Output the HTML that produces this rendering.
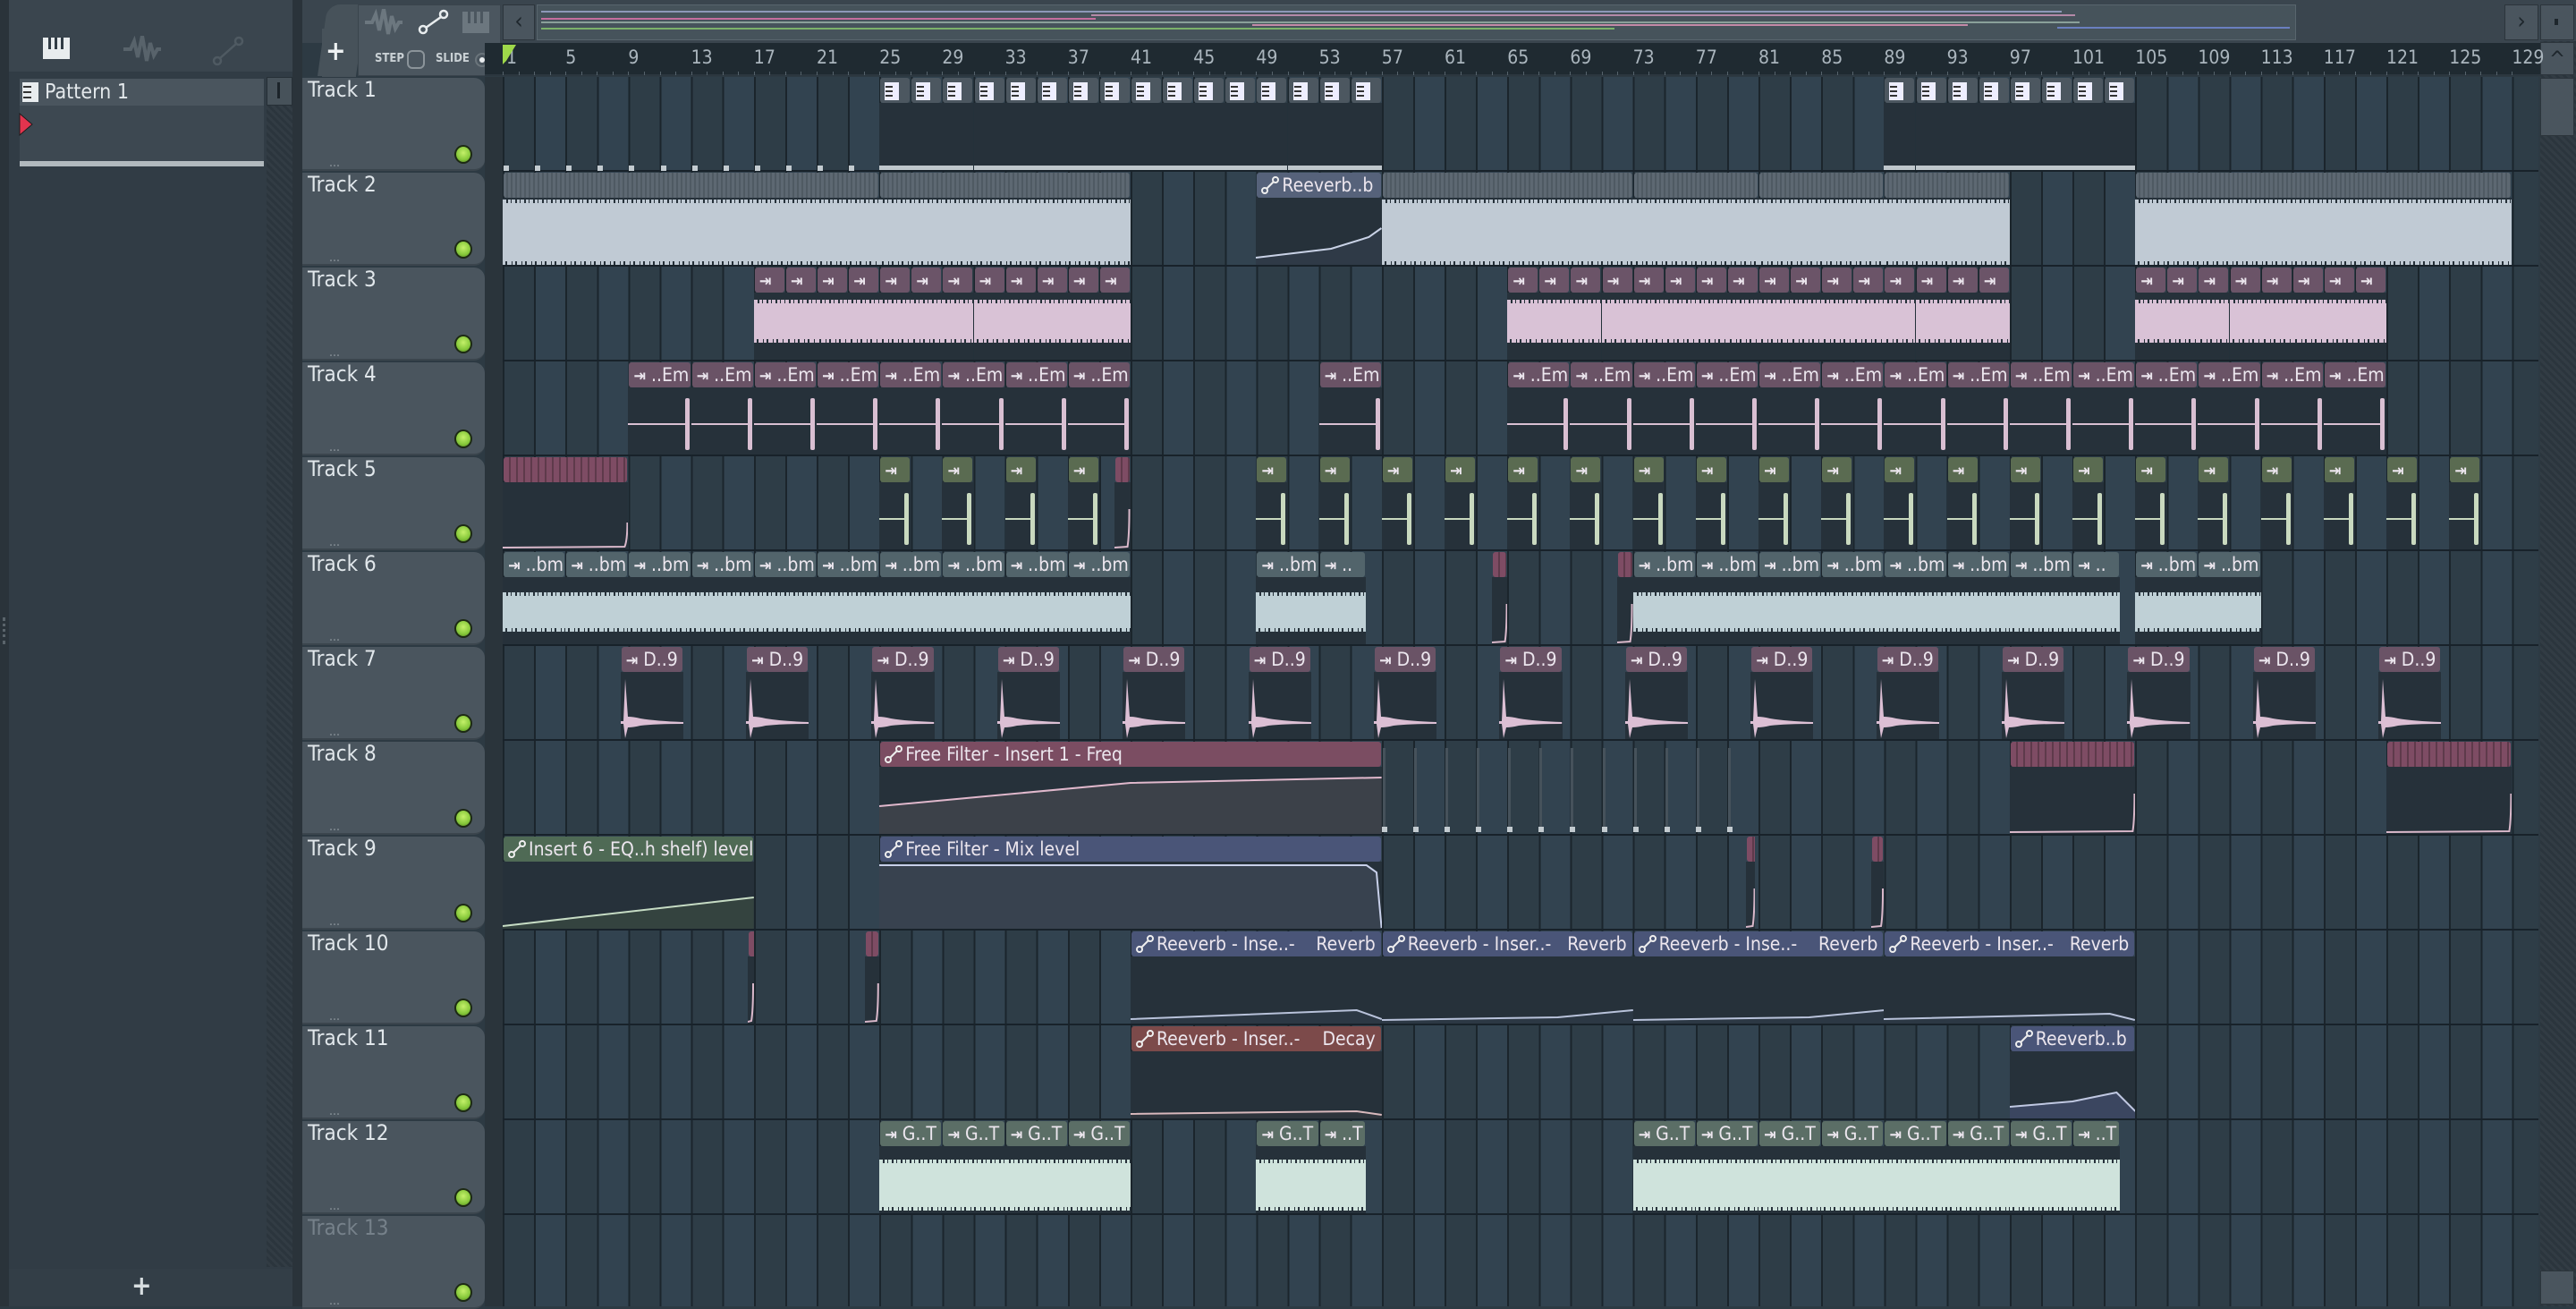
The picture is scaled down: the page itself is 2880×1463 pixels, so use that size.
<!DOCTYPE html>
<html><head><meta charset="utf-8"><style>
*{margin:0;padding:0;box-sizing:border-box}
body{width:2880px;height:1460px;overflow:hidden;background:#2d3a43;font-family:"DejaVu Sans Condensed","Liberation Sans Narrow","Liberation Sans",sans-serif;position:relative}
.a{position:absolute}
.clip{position:absolute;overflow:hidden}
.hd{position:absolute;left:1px;right:1px;top:0;height:28px;color:#ece6ee;font-size:21px;line-height:28px;padding-left:5px;white-space:nowrap;display:flex;justify-content:space-between;padding-right:6px;border-radius:3px;overflow:hidden}
.bd{position:absolute;left:0;right:0;top:28px;bottom:0;background:#26313a}
.tl{position:absolute;left:344px;color:#e1e7eb;font-size:24px}
</style></head><body>
<div class="a" style="left:0;top:0;width:10px;height:1460px;background:#2a333a"></div>
<div class="a" style="left:3px;top:690px;width:3px;height:30px;border-left:3px dotted #5a646b"></div>
<div class="a" style="left:10px;top:0;width:328px;height:86px;background:#3a454e"></div>
<div class="a" style="left:10px;top:80px;width:318px;height:1380px;background:#313c45"></div>
<svg class="a" style="left:48px;top:42px" width="30" height="24"><rect x="0" y="0" width="30" height="24" fill="#e8ecee"/><rect x="6" y="0" width="3" height="13" fill="#313c45"/><rect x="13" y="0" width="3" height="13" fill="#313c45"/><rect x="20" y="0" width="3" height="13" fill="#313c45"/></svg>
<svg class="a" style="left:138px;top:40px" width="42" height="30"><path d="M0 15 L8 15 L12 6 L16 24 L21 0 L26 28 L30 8 L34 22 L38 15 L42 15" stroke="#58636b" stroke-width="4" fill="none"/></svg>
<svg class="a" style="left:237px;top:40px" width="36" height="34"><circle cx="6" cy="28" r="4" fill="none" stroke="#4f5a62" stroke-width="2.5"/><circle cx="30" cy="6" r="4" fill="none" stroke="#4f5a62" stroke-width="2.5"/><line x1="9" y1="25" x2="27" y2="9" stroke="#4f5a62" stroke-width="2.5"/></svg>
<div class="a" style="left:22px;top:88px;width:273px;height:30px;background:#4a555e"></div>
<svg class="a" style="left:25px;top:92px" width="18" height="22"><rect width="18" height="22" fill="#e8ecee"/><rect x="1" y="4" width="9" height="2" fill="#333"/><rect x="1" y="10" width="9" height="2" fill="#333"/><rect x="1" y="16" width="9" height="2" fill="#333"/></svg>
<div class="a" style="left:50px;top:88px;color:#e3e8eb;font-size:23px;line-height:30px">Pattern 1</div>
<div class="a" style="left:22px;top:118px;width:273px;height:66px;background:#3d4851"></div>
<svg class="a" style="left:21px;top:126px" width="16" height="26"><path d="M1 1 L15 13 L1 25 Z" fill="#e2344e" stroke="#1d1d1d"/></svg>
<div class="a" style="left:22px;top:180px;width:273px;height:6px;background:#b1b9be"></div>
<div class="a" style="left:298px;top:86px;width:29px;height:1330px;background:repeating-linear-gradient(45deg,#2b353d 0 3px,#323c44 3px 6px)"></div>
<div class="a" style="left:298px;top:86px;width:29px;height:32px;background:#47525a;border:1px solid #262f36"></div>
<div class="a" style="left:310px;top:92px;width:3px;height:18px;background:#1c242a"></div>
<div class="a" style="left:10px;top:1418px;width:318px;height:42px;background:#333e47"></div>
<div class="a" style="left:147px;top:1420px;color:#d7dde0;font-size:30px;font-weight:bold">+</div>
<div class="a" style="left:327px;top:0;width:11px;height:1460px;background:#2a333a"></div>
<div class="a" style="left:338px;top:0;width:2542px;height:48px;background:#3a454e"></div>
<div class="a" style="left:355px;top:5px;width:43px;height:80px;background:#47525a;border-radius:14px 0 0 0;transform:skewX(-8deg);transform-origin:bottom"></div>
<div class="a" style="left:360px;top:32px;width:38px;height:54px;background:#47525a"></div>
<div class="a" style="left:364px;top:40px;color:#eef1f2;font-size:30px;font-weight:bold">+</div>
<div class="a" style="left:400px;top:5px;width:160px;height:80px;background:#4b565f;border:1px solid #3a444c"></div>
<svg class="a" style="left:408px;top:10px" width="42" height="30"><path d="M0 15 L8 15 L12 6 L16 24 L21 0 L26 28 L30 8 L34 22 L38 15 L42 15" stroke="#6c777f" stroke-width="4" fill="none"/></svg>
<svg class="a" style="left:467px;top:10px" width="36" height="30"><circle cx="6" cy="23" r="4" fill="none" stroke="#e8ecee" stroke-width="2.5"/><circle cx="29" cy="6" r="4" fill="none" stroke="#e8ecee" stroke-width="2.5"/><line x1="9" y1="21" x2="26" y2="9" stroke="#e8ecee" stroke-width="2.5"/></svg>
<svg class="a" style="left:517px;top:13px" width="30" height="24"><rect width="30" height="24" fill="#6c777f"/><rect x="6" y="0" width="3" height="13" fill="#4b565f"/><rect x="13" y="0" width="3" height="13" fill="#4b565f"/><rect x="20" y="0" width="3" height="13" fill="#4b565f"/></svg>
<div class="a" style="left:419px;top:58px;color:#c9d0d4;font-size:13px;font-weight:bold">STEP</div>
<div class="a" style="left:455px;top:56px;width:20px;height:21px;border:2px solid #8b949a;border-radius:6px"></div>
<div class="a" style="left:487px;top:58px;color:#c9d0d4;font-size:13px;font-weight:bold">SLIDE</div>
<div class="a" style="left:531px;top:59px;width:16px;height:16px;border:2px solid #6a747b;border-radius:50%"></div>
<div class="a" style="left:536px;top:64px;width:6px;height:6px;background:#e8ecee;border-radius:50%"></div>
<div class="a" style="left:562px;top:5px;width:36px;height:40px;background:#4a555e;border:1px solid #2c353c;color:#1e262c;font-size:26px;line-height:36px;text-align:center">‹</div>
<div class="a" style="left:600px;top:5px;width:1967px;height:40px;background:#46535b;border:1px solid #58656d"></div>
<div class="a" style="left:605px;top:12px;width:1700px;height:2px;background:#8d98b8"></div>
<div class="a" style="left:605px;top:20px;width:620px;height:2px;background:#c46e9e"></div>
<div class="a" style="left:1220px;top:16px;width:1100px;height:2px;background:#b48aa8"></div>
<div class="a" style="left:605px;top:24px;width:1720px;height:2px;background:#8aa09a"></div>
<div class="a" style="left:605px;top:31px;width:1200px;height:2px;background:#7cb26a"></div>
<div class="a" style="left:1400px;top:27px;width:800px;height:2px;background:#c48aa8"></div>
<div class="a" style="left:2300px;top:30px;width:260px;height:2px;background:#6a7fc0"></div>
<div class="a" style="left:2800px;top:5px;width:38px;height:40px;background:#4a555e;border:1px solid #2c353c;color:#1e262c;font-size:26px;line-height:36px;text-align:center">›</div>
<div class="a" style="left:2840px;top:5px;width:38px;height:40px;background:#4a555e;border:1px solid #2c353c"></div>
<div class="a" style="left:2856px;top:21px;width:4px;height:7px;background:#1e262c"></div>
<div class="a" style="left:542px;top:48px;width:2298px;height:37px;background:#1f2a31;border-bottom:2px solid #2c373f"></div>
<svg class="a" style="left:562px;top:50px;z-index:2" width="16" height="22"><path d="M0 0 L15 0 L4 18 L0 22 Z" fill="#9ed84a"/></svg>
<div class="a" style="left:2840px;top:46px;width:40px;height:1414px;background:repeating-linear-gradient(45deg,#2b353d 0 3px,#323c44 3px 6px)"></div>
<div class="a" style="left:2840px;top:47px;width:38px;height:37px;background:#4a555e;border:1px solid #2c353c;color:#1e262c;font-size:24px;text-align:center;line-height:36px">^</div>
<div class="a" style="left:2840px;top:87px;width:38px;height:65px;background:#4a555e;border:1px solid #2c353c"></div>
<div class="a" style="left:2840px;top:1420px;width:38px;height:38px;background:#4a555e;border:1px solid #2c353c"></div>
<div class="a" style="left:542px;top:86px;width:20px;height:1374px;background:#2a343b"></div>
<div id="grid" class="a" style="left:562px;top:86px;width:2276px;height:1374px;overflow:hidden;background:repeating-linear-gradient(90deg,#1b252c 0 2px,#2e3d47 2px 35.1px,#1b252c 35.1px 37.1px,#324350 37.1px 70.2px)"></div>
<div id="hdrs">
<div class="tl" style="top:86px">Track 1</div>
<div class="tl" style="top:192px">Track 2</div>
<div class="tl" style="top:298px">Track 3</div>
<div class="tl" style="top:404px">Track 4</div>
<div class="tl" style="top:510px">Track 5</div>
<div class="tl" style="top:616px">Track 6</div>
<div class="tl" style="top:722px">Track 7</div>
<div class="tl" style="top:828px">Track 8</div>
<div class="tl" style="top:934px">Track 9</div>
<div class="tl" style="top:1040px">Track 10</div>
<div class="tl" style="top:1146px">Track 11</div>
<div class="tl" style="top:1252px">Track 12</div>
<div class="tl" style="top:1358px;color:#76818a">Track 13</div>
</div>
<script>
var W=17.55;function X(b){return 562+(b-1)*W}function T(i){return 86+(i-1)*106}
var body=document.body,grid=document.getElementById('grid'),hd=document.getElementById('hdrs');
function el(p,css,html){var d=document.createElement('div');d.style.cssText=css;if(html)d.innerHTML=html;p.appendChild(d);return d}
for(var i=1;i<=13;i++){
 var bg=el(body,'position:absolute;left:338px;top:'+(T(i)+1)+'px;width:204px;height:104px;background:#4a555e;border-radius:0 12px 12px 0;border-bottom:2px solid #3b454d');
 body.insertBefore(bg,hd);
 el(body,'position:absolute;left:508px;top:'+(T(i)+76)+'px;width:20px;height:21px;border-radius:50%;background:radial-gradient(circle at 50% 40%,#c4f06a,#86c83a 60%,#4d7a1e);border:2px solid #1d2a14');
 el(body,'position:absolute;left:368px;top:'+(T(i)+88)+'px;color:#8d969d;font-size:14px','...');
 el(grid,'position:absolute;left:0;right:0;top:'+(T(i)-86+104)+'px;height:2px;background:#18222a');
}
for(var b=1;b<=129;b+=4){el(body,'position:absolute;top:52px;left:'+(X(b)+(b==1?4:0))+'px;color:#aab5bd;font-size:21px',''+b)}
for(var b=1;b<=129;b++){el(body,'position:absolute;top:80px;left:'+X(b)+'px;width:1px;height:4px;background:#55626b')}
var arrow='<b style="font-size:18px">⇥</b>';
var auto='<svg width="20" height="20" style="vertical-align:-3px;margin-right:3px"><circle cx="4" cy="16" r="3" fill="none" stroke="#eee" stroke-width="2"/><circle cx="16" cy="4" r="3" fill="none" stroke="#eee" stroke-width="2"/><line x1="6" y1="14" x2="14" y2="6" stroke="#eee" stroke-width="2"/></svg>';
function clip(t,b1,b2,hc,label,bodyfn,hh){
 hh=hh||28;
 var c=el(grid,'left:'+(X(b1)-562)+'px;top:'+(T(t)-86+1)+'px;width:'+((b2-b1)*W)+'px;height:103px');c.className='clip';
 var h=el(c,'background:'+hc+';height:'+hh+'px');h.className='hd';
 if(label){if(label.indexOf('<span')===0)h.innerHTML=label;else h.innerHTML='<span>'+label+'</span>';}
 var bd=el(c,'top:'+hh+'px');bd.className='bd';
 if(bodyfn)bodyfn(bd,(b2-b1)*W);
 return c;
}
function wave(col,y1,y2){return function(b,w){
 el(b,'position:absolute;left:0;right:0;top:'+(y1-28+4)+'px;height:'+(y2-y1-8)+'px;background:'+col);
 el(b,'position:absolute;left:0;right:0;top:'+(y1-28)+'px;height:5px;background:repeating-linear-gradient(90deg,'+col+' 0 4px,transparent 4px 6px,'+col+' 6px 9px,transparent 9px 10px)');
 el(b,'position:absolute;left:0;right:0;top:'+(y2-28-5)+'px;height:5px;background:repeating-linear-gradient(90deg,'+col+' 0 3px,transparent 3px 5px,'+col+' 5px 10px,transparent 10px 11px)');
}}
function spikeLine(col,y){return function(b,w){el(b,'position:absolute;left:0;right:4px;top:'+(y-28)+'px;height:2px;background:'+col);el(b,'position:absolute;right:2px;top:'+(40-28)+'px;width:5px;height:58px;background:'+col+';border-radius:2px')}}
function svgBody(pts,stroke,fill){return function(b,w){var h=75;var p=pts.map(function(q){return (q[0]*w)+','+(q[1]-28)}).join(' ');
 b.innerHTML='<svg width="'+w+'" height="'+h+'" style="position:absolute;left:0;top:0"><polygon points="0,'+h+' '+p+' '+w+','+h+'" fill="'+fill+'"/><polyline points="'+p+'" fill="none" stroke="'+stroke+'" stroke-width="2"/></svg>'}}
function slice(t,b1,b2){clip(t,b1,b2,'repeating-linear-gradient(90deg,#7e4c64 0 6px,#5e3a4b 6px 8px)','',function(b,w){b.innerHTML='<svg width="'+w+'" height="75" style="position:absolute"><path d="M0 73 L'+(w-3)+' 72 Q'+(w-1)+' 60 '+(w-1)+' 30" stroke="#d9b8ca" stroke-width="2" fill="none"/></svg>'})}
var patIcon='<svg width="16" height="20" style="vertical-align:-4px"><rect width="16" height="20" fill="#eef"/><rect x="1" y="4" width="8" height="2" fill="#333"/><rect x="1" y="9" width="8" height="2" fill="#333"/><rect x="1" y="14" width="8" height="2" fill="#333"/></svg>';
for(var b=1;b<25;b+=2){el(grid,'position:absolute;left:'+(X(b)-562+1)+'px;top:99px;width:6px;height:6px;background:#c3cbd0')}
function pats(a,z){for(var b=a;b<z;b+=2)clip(1,b,b+2,'#4c5760',patIcon,function(bd){el(bd,'position:absolute;left:0;right:0;bottom:0;height:5px;background:#bfc7cc')})}
pats(25,57);pats(89,105);
[[1,25],[25,41],[57,73],[73,81],[81,89],[89,97],[105,129]].forEach(function(s){clip(2,s[0],s[1],'repeating-linear-gradient(90deg,#5d6872 0 3px,#4f5a63 3px 5px)','',wave('#c0cad4',30,103))});
clip(2,49,57,'#56627a',auto+'Reeverb..b',svgBody([[0,95],[0.6,85],[0.9,72],[1,62]],'#c9d2e6','#2f3a47'));
[[17,41],[65,97],[105,121]].forEach(function(s){for(var b=s[0];b<s[1];b+=2)clip(3,b,b+2,'#6b5468',arrow,wave('#d9c2d6',36,84))});
function ems(a,z){for(var b=a;b<z;b+=4)clip(4,b,b+4,'#6a5366',arrow+' ..Em',spikeLine('#d9bfd2',68))}
ems(9,41);ems(53,57);ems(65,121);
clip(5,1,9,'repeating-linear-gradient(90deg,#7e4c64 0 6px,#5e3a4b 6px 8px)','',function(b,w){b.innerHTML='<svg width="'+w+'" height="75" style="position:absolute"><path d="M0 73 L'+(w-4)+' 72 Q'+(w-1)+' 65 '+(w-1)+' 45" stroke="#d9b8ca" stroke-width="2" fill="none"/></svg>'});
[25,29,33,37].forEach(function(b){clip(5,b,b+2,'#5a6b51',arrow,spikeLine('#c9d9bf',68))});
slice(5,40,41);
for(var b=49;b<=125;b+=4)clip(5,b,b+2,'#5a6b51',arrow,spikeLine('#c9d9bf',68));
for(var b=1;b<41;b+=4)clip(6,b,b+4,'#52646b',arrow+' ..bm',wave('#bfd0d6',45,89));
clip(6,49,53,'#52646b',arrow+' ..bm',wave('#bfd0d6',45,89));clip(6,53,56,'#52646b',arrow+' ..',wave('#bfd0d6',45,89));
slice(6,64,65);slice(6,72,73);
for(var b=73;b<101;b+=4)clip(6,b,b+4,'#52646b',arrow+' ..bm',wave('#bfd0d6',45,89));
clip(6,101,104,'#52646b',arrow+' ..',wave('#bfd0d6',45,89));
clip(6,105,109,'#52646b',arrow+' ..bm',wave('#bfd0d6',45,89));clip(6,109,113,'#52646b',arrow+' ..bm',wave('#bfd0d6',45,89));
for(var k=0;k<15;k++){clip(7,8.5+8*k,12.5+8*k,'#6a5366',arrow+' D..9',function(b,w){b.innerHTML='<svg width="'+w+'" height="75" style="position:absolute"><path d="M0 55 L3 55 L5 8 L8 50 Q14 50 22 52 Q40 55 '+w+' 56 L'+w+' 58 Q40 58 22 60 Q14 62 8 62 L5 74 L3 58 L0 58 Z" fill="#dcbfd4"/></svg>'})}
clip(8,25,57,'#7b4d62',auto+'Free Filter - Insert 1 - Freq',svgBody([[0,72],[0.5,46],[1,40]],'#e0b8cc','#3c4149'));
for(var b=57;b<81;b+=2){el(grid,'position:absolute;left:'+(X(b)-562+1)+'px;top:'+(T(8)-86+8)+'px;width:3px;height:90px;background:#46525b');el(grid,'position:absolute;left:'+(X(b)-562)+'px;top:'+(T(8)-86+96)+'px;width:6px;height:6px;background:#c3cbd0')}
slice(8,97,105);slice(8,121,129);
clip(9,1,17,'#4f6a55',auto+'Insert 6 - EQ..h shelf) level',svgBody([[0,100],[1,68]],'#c6dcc4','#34433f'));
clip(9,25,57,'#4a5578',auto+'Free Filter - Mix level',svgBody([[0,32],[0.97,32],[0.99,40],[1,102]],'#c8d0ea','#38424f'));
slice(9,80.2,80.8);slice(9,88.2,89);
slice(10,16.6,17);slice(10,24.1,25);
function rv(t,a,z,l,r,col,pts){clip(t,a,z,col,'<span>'+auto+l+'</span><span>'+r+'</span>',svgBody(pts,'#b8c2da','#2c3844'))}
rv(10,41,57,'Reeverb - Inse..-','Reverb','#4a5578',[[0,98],[0.9,88],[1,98]]);
rv(10,57,73,'Reeverb - Inser..-','Reverb','#4a5578',[[0,99],[0.7,96],[1,88]]);
rv(10,73,89,'Reeverb - Inse..-','Reverb','#4a5578',[[0,99],[0.7,96],[1,88]]);
rv(10,89,105,'Reeverb - Inser..-','Reverb','#4a5578',[[0,98],[0.9,92],[1,99]]);
clip(11,41,57,'#7c4a4a','<span>'+auto+'Reeverb - Inser..-</span><span>Decay</span>',svgBody([[0,98],[0.9,95],[1,99]],'#d8b8bc','#2e343c'));
clip(11,97,105,'#4a5578',auto+'Reeverb..b',svgBody([[0,90],[0.5,84],[0.85,74],[1,95]],'#c0c8e2','#3b4660'));
function gts(a,z){for(var b=a;b<z;b+=4)clip(12,b,Math.min(b+4,z),'#5b6e66',arrow+(b+4>z?' ..T':' G..T'),wave('#cfe3dc',43,100))}
gts(25,41);gts(49,56);gts(73,104);
</script>
</body></html>
